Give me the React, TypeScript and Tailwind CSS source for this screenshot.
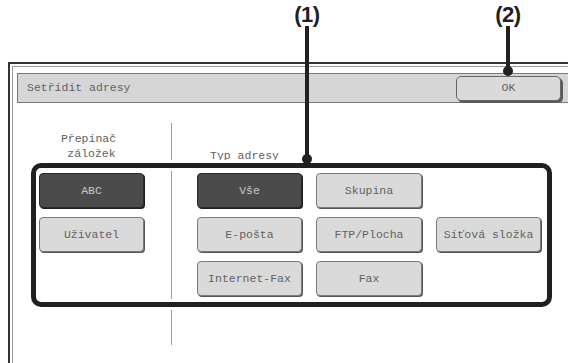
import React from 'react';

const mono = { fontFamily: '"Liberation Mono", "Courier New", monospace' };

function Btn({ label, dark = false, className = '' }: { label: string; dark?: boolean; className?: string }) {
  return (
    <div
      className={
        'flex items-center justify-center rounded-[4px] border text-[11.5px] ' +
        (dark
          ? 'bg-[#4b4b4b] border-[#2a2a2a] text-[#c8c8c8] shadow-[1px_1px_0_#1e1e1e]'
          : 'bg-[#dadada] border-[#7a7a7a] text-[#626262] shadow-[1px_1px_0_#555]') +
        ' ' +
        className
      }
    >
      {label}
    </div>
  );
}

function Callout({ label, x, top, lineEnd }: { label: string; x: number; top: number; lineEnd: number }) {
  // annotation marker: bold number, a stem and a dot on its tip
  return (
    <div className="absolute flex flex-col items-center" style={{ left: x - 20, top, width: 40 }}>
      <span className="text-[22px] font-bold leading-[23px] text-[#231f20] tracking-[-0.5px]" style={{ fontFamily: '"Liberation Sans", Arial, sans-serif' }}>
        {label}
      </span>
      <div className="w-[4px] bg-[#231f20]" style={{ height: lineEnd - top - 27 }} />
      <div className="h-[10px] w-[10px] -mt-[5px] rounded-full bg-[#231f20]" />
    </div>
  );
}

export default function App() {
  return (
    <div className="relative w-[568px] h-[363px] overflow-hidden bg-white pt-[62px] pl-[8px]" style={mono}>
      {/* dialog window */}
      <div className="w-[620px] h-[360px] border-l-2 border-t-2 border-[#333] pl-[2px] pt-[2px]">
        <div className="h-full border-l border-t border-[#9a9a9a] pl-[4px] pt-[6px]">
          <div className="w-[563px] h-[30px] flex items-center justify-between border border-[#7a7a7a] bg-[#d6d6d6] pl-[9px] pr-[18px]">
            <span className="text-[11.5px] text-[#626262]">Setřídit adresy</span>
            <Btn label="OK" className="w-[105px] h-[25px] rounded-[5px] border-[#666] shadow-[2px_2px_0_#5a5a5a]" />
          </div>

          <div className="flex mt-[20px]">
            {/* left column */}
            <div className="w-[154px] pl-[22px]">
              <div className="w-[105px] h-[50px] pt-[8px] text-center text-[11.5px] leading-[15px] text-[#626262]">
                <div className="-ml-[6px]">Přepínač</div>
                <div>záložek</div>
              </div>
              <div className="flex flex-col gap-[9px]">
                <Btn label="ABC" dark className="w-[105px] h-[35px]" />
                <Btn label="Uživatel" className="w-[105px] h-[35px]" />
              </div>
            </div>

            <div className="w-px h-[222px] bg-[#9d9d9d]" />

            {/* right column */}
            <div className="pl-[25px]">
              <div className="h-[50px] pt-[25px] pl-[13px] text-[11.5px] leading-[15px] text-[#626262]">Typ adresy</div>
              <div className="grid grid-cols-[105px_106px_105px] grid-rows-[35px_35px_35px] gap-x-[14px] gap-y-[9px]">
                <Btn label="Vše" dark />
                <Btn label="Skupina" />
                <div />
                <Btn label="E-pošta" />
                <Btn label="FTP/Plocha" />
                <Btn label="Síťová složka" />
                <Btn label="Internet-Fax" />
                <Btn label="Fax" />
              </div>
            </div>
          </div>
        </div>
      </div>

      {/* callout annotations */}
      <div className="absolute left-[31px] top-[163px] w-[521px] h-[144px] rounded-[10px] border-[5px] border-[#231f20] shadow-[0_0_0_3px_#fff,inset_0_0_0_3px_#fff]" />
      <Callout label="(1)" x={307} top={3} lineEnd={163} />
      <Callout label="(2)" x={508} top={3} lineEnd={75} />
    </div>
  );
}
